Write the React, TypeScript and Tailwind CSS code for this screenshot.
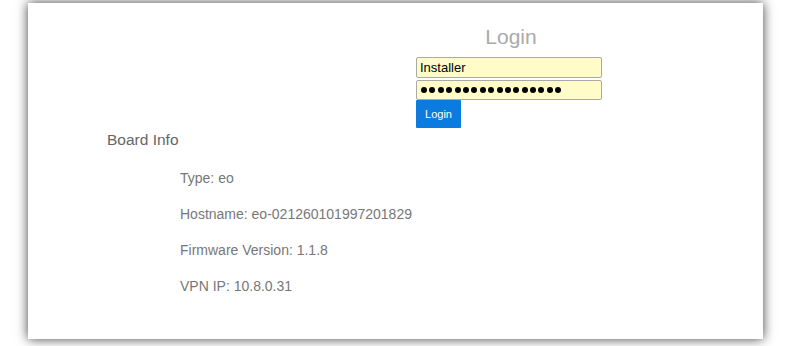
import React from 'react'

const boardInfo = [
  'Type: eo',
  'Hostname: eo-021260101997201829',
  'Firmware Version: 1.1.8',
  'VPN IP: 10.8.0.31',
]

export default function App() {
  return (
    <div className="w-[797px] h-[346px] bg-white overflow-hidden font-['Liberation_Sans',Arial,sans-serif]">
      <div className="ml-[28px] mt-[3px] w-[735px] h-[336px] bg-white shadow-[0_0_11px_rgba(0,0,0,0.75)] pt-[22px]">
        {/* Login form */}
        <div className="ml-[388px] w-[186px] flex flex-col">
          <h1 className="text-center text-[21px] leading-[24px] text-[#aaaaaa] pl-[4px]">Login</h1>
          <input
            readOnly
            value="Installer"
            className="mt-[8px] h-[21px] w-full bg-[#fffcc8] border border-[#a9a9a9] rounded-[2px] px-[3px] text-[13px] text-black outline-none"
          />
          <div className="mt-[2px] h-[20px] w-full bg-[#fffcc8] border border-[#a9a9a9] rounded-[2px] pl-[4px] flex items-center gap-[2.4px]">
            {Array.from({ length: 17 }).map((_, i) => (
              <span key={i} className="w-[6px] h-[6px] rounded-full bg-black" />
            ))}
          </div>
          <button className="w-[45px] h-[28px] bg-[#0b7be0] text-white text-[11px] rounded-[1px]">
            Login
          </button>
        </div>

        {/* Board info */}
        <h2 className="ml-[79px] mt-[3px] text-[15.5px] leading-[18px] text-[#666666]">Board Info</h2>
        <div className="ml-[152px] mt-[21px] flex flex-col gap-[20px]">
          {boardInfo.map((line) => (
            <p key={line} className="text-[14px] leading-[16px] text-[#777777]">
              {line}
            </p>
          ))}
        </div>
      </div>
    </div>
  )
}
